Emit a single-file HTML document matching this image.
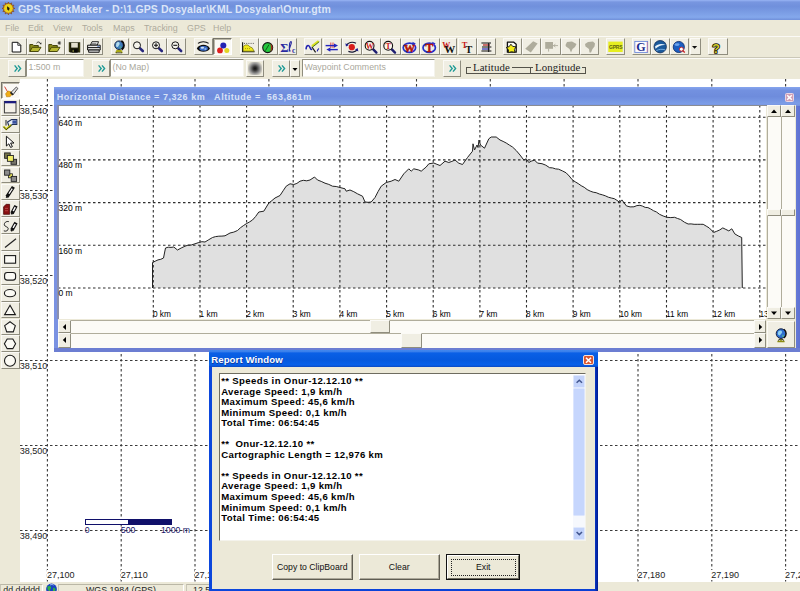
<!DOCTYPE html>
<html><head><meta charset="utf-8"><title>GPS TrackMaker</title>
<style>
*{box-sizing:border-box;margin:0;padding:0}
html,body{width:800px;height:591px;overflow:hidden;background:#ece9d8;font-family:"Liberation Sans",sans-serif;}
.a{position:absolute}
#title{left:0;top:0;width:800px;height:19.6px;background:linear-gradient(#98b4f4 0,#7896e0 10%,#7090dc 32%,#7a9ce4 60%,#84a8ec 86%,#7090da 100%)}
#title span{position:absolute;left:18px;top:3px;font-weight:bold;font-size:10.5px;color:#dbe5f8;white-space:nowrap;letter-spacing:.11px}
#menu{left:0;top:19.6px;width:800px;height:16.4px;background:#ece9d8}
#menu span{position:absolute;top:3px;font-size:8.9px;color:#aeab9d;white-space:nowrap}
#tb1{left:0;top:36px;width:800px;height:22px;background:#ece9d8;border-top:1px solid #fbfaf6;border-bottom:1px solid #cbc8b8}
#tb2{left:0;top:58px;width:800px;height:21px;background:#ece9d8;border-top:1px solid #fbfaf6}
.b{position:absolute;background:#f0eee3;border:1px solid;border-color:#fbfaf6 #8f8d7e #8f8d7e #fbfaf6;overflow:hidden}
.b.p{border-color:#77756a #fff #fff #77756a;background:#faf9f5;box-shadow:inset 1px 1px 0 #b9b6a6}
.b svg{position:absolute;left:0;top:0}
.f{position:absolute;background:#fff;border:1px solid;border-color:#8f8d7e #f4f3ec #f4f3ec #8f8d7e;font-size:8.800px;color:#aaa89c;white-space:nowrap;overflow:hidden;line-height:15px;padding-left:1.500px}
#ltb{left:0;top:79px;width:20px;height:503px;background:#ece9d8}
#map{left:20px;top:79px;width:780px;height:503px;background:#fff;overflow:hidden}
#status{left:0;top:582px;width:800px;height:9px;background:#ece9d8;overflow:hidden}
.l{position:absolute;font-size:9.050px;color:#1c1c1c;white-space:nowrap;line-height:10px}
</style></head><body>
<div id="title" class="a"><svg class="a" style="left:0;top:0" width="18" height="18" viewBox="0 0 18 18"><polygon points="14.8,8.4 12.7,9.5 13.9,11.6 11.5,11.5 11.6,13.9 9.5,12.7 8.4,14.8 7.3,12.7 5.2,13.9 5.3,11.5 2.9,11.6 4.1,9.5 2.0,8.4 4.1,7.3 2.9,5.2 5.3,5.3 5.2,2.9 7.3,4.1 8.4,2.0 9.5,4.1 11.6,2.9 11.5,5.3 13.9,5.2 12.7,7.3" fill="#c8841a" stroke="#7a3a10" stroke-width=".6"/><circle cx="8.4" cy="8.4" r="4.3" fill="#ecd21a"/><path d="M7 6.200l2.600 1.800-.6 2.800-1.800-1.400z" fill="#1a1a10"/></svg><span>GPS TrackMaker - D:\1.GPS Dosyalar\KML Dosyalar\Onur.gtm</span></div>
<div id="menu" class="a"><span style="left:5px">File</span><span style="left:28px">Edit</span><span style="left:53px">View</span><span style="left:82px">Tools</span><span style="left:113px">Maps</span><span style="left:144px">Tracking</span><span style="left:187px">GPS</span><span style="left:213px">Help</span></div>
<div id="tb1" class="a"></div><div id="tb2" class="a"></div>
<div class="b" style="left:8px;top:37.5px;width:19px;height:17.5px"></div>
<div class="b" style="left:27px;top:37.5px;width:19px;height:17.5px"></div>
<div class="b" style="left:46px;top:37.5px;width:19px;height:17.5px"></div>
<div class="b" style="left:65px;top:37.5px;width:19px;height:17.5px"></div>
<div class="b" style="left:84px;top:37.5px;width:19px;height:17.5px"></div>
<div class="b" style="left:110.6px;top:37.5px;width:18.900000000000006px;height:17.5px"></div>
<div class="b" style="left:129.5px;top:37.5px;width:18.900000000000006px;height:17.5px"></div>
<div class="b" style="left:148.4px;top:37.5px;width:19.0px;height:17.5px"></div>
<div class="b" style="left:167.4px;top:37.5px;width:19px;height:17.5px"></div>
<div class="b" style="left:194px;top:37.5px;width:18.5px;height:17.5px"></div>
<div class="b p" style="left:212.5px;top:37.5px;width:19px;height:17.5px"></div>
<div class="b" style="left:240px;top:37.5px;width:18.5px;height:17.5px"></div>
<div class="b" style="left:258.5px;top:37.5px;width:19.5px;height:17.5px"></div>
<div class="b" style="left:278px;top:37.5px;width:19px;height:17.5px"></div>
<div class="b" style="left:303.8px;top:37.5px;width:18.69999999999999px;height:17.5px"></div>
<div class="b" style="left:322.5px;top:37.5px;width:19.5px;height:17.5px"></div>
<div class="b" style="left:342px;top:37.5px;width:19.80000000000001px;height:17.5px"></div>
<div class="b" style="left:361.8px;top:37.5px;width:19.5px;height:17.5px"></div>
<div class="b" style="left:381.3px;top:37.5px;width:19.69999999999999px;height:17.5px"></div>
<div class="b" style="left:401px;top:37.5px;width:19.30000000000001px;height:17.5px"></div>
<div class="b" style="left:420.3px;top:37.5px;width:19.30000000000001px;height:17.5px"></div>
<div class="b" style="left:439.6px;top:37.5px;width:17.899999999999977px;height:17.5px"></div>
<div class="b" style="left:457.5px;top:37.5px;width:19.5px;height:17.5px"></div>
<div class="b" style="left:477px;top:37.5px;width:19px;height:17.5px"></div>
<div class="b" style="left:502.8px;top:37.5px;width:18.80000000000001px;height:17.5px"></div>
<div class="b" style="left:521.6px;top:37.5px;width:19.399999999999977px;height:17.5px"></div>
<div class="b" style="left:541px;top:37.5px;width:19.5px;height:17.5px"></div>
<div class="b" style="left:560.5px;top:37.5px;width:19.299999999999955px;height:17.5px"></div>
<div class="b" style="left:579.8px;top:37.5px;width:19px;height:17.5px"></div>
<div class="b" style="left:606px;top:37.5px;width:19px;height:17.5px"></div>
<div class="b" style="left:632px;top:37.5px;width:18.600000000000023px;height:17.5px"></div>
<div class="b" style="left:650.6px;top:37.5px;width:19.600000000000023px;height:17.5px"></div>
<div class="b" style="left:670.2px;top:37.5px;width:19px;height:17.5px"></div>
<div class="b" style="left:689.5px;top:37.5px;width:11px;height:17.5px"></div>
<div class="b" style="left:708px;top:37.5px;width:19.5px;height:17.5px"></div>
<svg class="a" style="left:0;top:0;pointer-events:none" width="800" height="60" viewBox="0 0 800 60"><path d="M12.2 42.3h5.6l3 3v6.7h-8.6z" fill="#fff" stroke="#111" stroke-width="1"/><path d="M17.8 42.3v3h3" fill="none" stroke="#111" stroke-width=".8"/><path d="M29.8 51.5v-7h3l1 1h4.5v2" fill="#8c8c1c" stroke="#3a3a00" stroke-width=".9"/><path d="M29.8 51.5l2.6-4.2h8.6l-2.7 4.2z" fill="#b9b934" stroke="#3a3a00" stroke-width=".9"/><path d="M36.5 43.2c1.2-1.6 3-1.6 4 .2" fill="none" stroke="#222" stroke-width=".9"/><path d="M39.3 43.8l1.9.6.3-2z" fill="#222"/><path d="M48.8 51.5v-7h3l1 1h4.5v2" fill="#8c8c1c" stroke="#3a3a00" stroke-width=".9"/><path d="M48.8 51.5l2.6-4.2h8.6l-2.7 4.2z" fill="#b9b934" stroke="#3a3a00" stroke-width=".9"/><path d="M59.3 41.2v3.6M57.5 43h3.6M58 41.8l2.6 2.4M60.6 41.8l-2.6 2.4" stroke="#333" stroke-width=".8"/><path d="M68.800 42.200h11.400v10.400h-10.200l-1.200-1.200z" fill="#1c1c08"/><rect x="71.200" y="42.800" width="6.600" height="4.800" fill="#e2dece"/><rect x="71.600" y="49.200" width="6" height="3.400" fill="#050505"/><rect x="72.400" y="49.800" width="1.600" height="2.400" fill="#6b6b30"/><path d="M69.600 43v8.600M79.400 43v8.800" stroke="#4a4a10" stroke-width=".8"/><path d="M90.500 45l1.500-3.300h6.500l-1.200 3.300z" fill="#fbfbfb" stroke="#111" stroke-width=".9"/><path d="M91.800 43.400h4.600" stroke="#555" stroke-width=".7"/><path d="M87.600 45.200h12.600v4.800h-12.600z" fill="#ececec" stroke="#111" stroke-width="1"/><path d="M88.600 50h10.600v2.300h-10.600z" fill="#c8c8c8" stroke="#111" stroke-width=".9"/><path d="M88 47.600h12" stroke="#111" stroke-width="1"/><rect x="97.400" y="45.800" width="2" height="1.200" fill="#6a8ad0"/><path d="M115.6 52.6l3.400-2.600 3.400 2.600M116.4 50.2l2.600 1.400 2.600-1.400" stroke="#a8a814" stroke-width="1.500" fill="none"/><path d="M115.8 52.800000000000004h6.400" stroke="#2a2a00" stroke-width=".8"/><circle cx="119" cy="45.2" r="4.3" fill="#3f7cbc" stroke="#1a2440" stroke-width=".9"/><path d="M116.4 43.0c1.200-1.400 2.800-1.200 3.200 0s-.6 2.200-1.400 3.400-2 .4-2.200-1z" fill="#b4dcee"/><path d="M119.6 46.2c1-.4 2 .2 1.800 1.400s-1.600 1.200-2 .2z" fill="#4aa090"/><path d="M121.4 40.800000000000004a5.400 5.400 0 0 1 .4 9" fill="none" stroke="#0a0a0a" stroke-width="1.700"/><path d="M139.8 48.099999999999994l3 2.900" stroke="#26267c" stroke-width="2.600" stroke-linecap="round"/><circle cx="137" cy="45.3" r="3.500" fill="#f4f3ec" stroke="#151515" stroke-width="1"/><path d="M158.8 48.099999999999994l3 2.900" stroke="#26267c" stroke-width="2.600" stroke-linecap="round"/><circle cx="156" cy="45.3" r="3.500" fill="#f4f3ec" stroke="#151515" stroke-width="1"/><path d="M154 45.3h4M156 43.3v4" stroke="#111" stroke-width="1.1"/><path d="M178.10000000000002 48.099999999999994l3 2.900" stroke="#26267c" stroke-width="2.600" stroke-linecap="round"/><circle cx="175.3" cy="45.3" r="3.500" fill="#f4f3ec" stroke="#151515" stroke-width="1"/><path d="M173.3 45.3h4" stroke="#111" stroke-width="1.1"/><path d="M198 43.400c2.600-2.200 8-2.200 10.600 0" fill="none" stroke="#111" stroke-width="1.200"/><path d="M196.800 48.400c2.600-4.800 10.600-4.800 13.200 0-2.600 4.400-10.600 4.400-13.200 0z" fill="#0c0c0c"/><ellipse cx="203.600" cy="48.400" rx="4.200" ry="2.400" fill="#3a6cc8"/><ellipse cx="202.400" cy="47.800" rx="1.700" ry="1" fill="#cfe2f6"/><ellipse cx="205.400" cy="49" rx="1.100" ry=".7" fill="#a8c8ee"/><circle cx="220" cy="50.400" r="2.900" fill="#de2020"/><circle cx="226.800" cy="50.500" r="2.500" fill="#e2d424"/><circle cx="223.300" cy="45.400" r="3" fill="#2222b4"/><path d="M242.6 42.2v9.6h12" fill="none" stroke="#111" stroke-width="1.1"/><path d="M243.2 51.2v-4.6l2-1.6 2.6 0 2.2 1.8 2.2 1 2 3.4z" fill="#f0e81c" stroke="#5a5a00" stroke-width=".6"/><path d="M244 43.4h10" stroke="#444" stroke-width=".9" stroke-dasharray="1 1.2"/><path d="M245 48.6h6" stroke="#8a7a00" stroke-width=".7" stroke-dasharray="1 1"/><circle cx="267.7" cy="47.6" r="5" fill="#23c63c" stroke="#141414" stroke-width="1.1"/><path d="M270.3 43.4a5 5 0 0 1 0 8.4c.8-2.6.8-5.8 0-8.4z" fill="#a5321c"/><path d="M265.4 50.6l3.6-6" stroke="#0d5a16" stroke-width="1"/><text x="280.2" y="52" font-family="Liberation Serif" font-size="12.5" font-weight="bold" fill="#2a2aa0">Σ</text><path d="M289.2 51.6c-.8-3 2.6-7.6 2.2-9.4-.4-1.4-1.8 0-2 2.8s-.2 5.4 1 6.4" fill="none" stroke="#2a2aa0" stroke-width="1.1"/><text x="292" y="52.6" font-family="Liberation Serif" font-size="7.5" font-weight="bold" fill="#2a2aa0">c</text><path d="M306 49.400c.2-2.400 1-3.800 2.200-3.800s1.600 1.400 2.200 2.800 1.200 1.200 1.800.8" fill="none" stroke="#2222b0" stroke-width="1.500"/><path d="M311.800 46.800l3.800 5.600" stroke="#111" stroke-width="1.100"/><path d="M312 46.200l6.600-5.200" stroke="#d8e020" stroke-width="2.200"/><path d="M312.600 47l6.600-5.200" stroke="#2a5a10" stroke-width=".8"/><path d="M317.200 51.400c.2-1.400.8-2.400 1.800-3" fill="none" stroke="#2222b0" stroke-width="1.200"/><path d="M330.800 42.400v5.600M333 42.400v5.600" stroke="#e05050" stroke-width="1.100"/><path d="M325.600 45.600h9" stroke="#2222c0" stroke-width="1.400"/><path d="M334 43.400l4 2.200-4 2.200z" fill="#2222c0"/><path d="M329.600 49.600h8.200" stroke="#2222c0" stroke-width="1.400"/><path d="M330.400 47.400l-4 2.200 4 2.200z" fill="#2222c0"/><circle cx="351.800" cy="47.200" r="3.100" fill="#d81c1c"/><path d="M346.600 45.200c1-2.600 5.600-4 9.400-2" fill="none" stroke="#151530" stroke-width="1.200"/><path d="M345.400 43.200l.6 3.400 2.800-1.600z" fill="#1c1c90"/><path d="M357 49.400c-1 2.400-5 3.600-8.600 2" fill="none" stroke="#151530" stroke-width="1.200"/><path d="M358.400 51.400l-.8-3.400-2.600 1.800z" fill="#1c1c90"/><path d="M373.0 49.199999999999996l3.400 3.400" stroke="#1c1c70" stroke-width="2.400" stroke-linecap="round"/><circle cx="369.6" cy="45.8" r="4.4" fill="#fbf6ee" stroke="#151515" stroke-width="1.1"/><text x="365.8" y="48.699999999999996" font-family="Liberation Serif" font-size="8" font-weight="bold" fill="#c81818">W</text><path d="M391.59999999999997 49.199999999999996l3.400 3.400" stroke="#1c1c70" stroke-width="2.400" stroke-linecap="round"/><circle cx="388.2" cy="45.8" r="4.4" fill="#fbf6ee" stroke="#151515" stroke-width="1.1"/><text x="385.59999999999997" y="48.699999999999996" font-family="Liberation Serif" font-size="8" font-weight="bold" fill="#c81818">T</text><ellipse cx="409.4" cy="47.800" rx="6.200" ry="4.600" fill="none" stroke="#2230c8" stroke-width="1.700"/><path d="M412.4 41.800l3.400 1.800-3 2z" fill="#2230c8"/><text x="404.0" y="52" font-family="Liberation Serif" font-size="11" font-weight="bold" fill="#b41408" stroke="#b41408" stroke-width=".5">W</text><ellipse cx="429.2" cy="47.800" rx="6.200" ry="4.600" fill="none" stroke="#2230c8" stroke-width="1.700"/><path d="M432.2 41.800l3.400 1.800-3 2z" fill="#2230c8"/><text x="425.4" y="52" font-family="Liberation Serif" font-size="11.5" font-weight="bold" fill="#b41408" stroke="#b41408" stroke-width=".5">T</text><text x="442.2" y="47.6" font-family="Liberation Serif" font-size="8" font-weight="bold" fill="#c81818">W</text><text x="444.2" y="52.6" font-family="Liberation Serif" font-size="11" font-weight="bold" fill="#111">W</text><text x="461.8" y="48" font-family="Liberation Serif" font-size="8.5" font-weight="bold" fill="#c81818">T</text><text x="465.2" y="52.6" font-family="Liberation Serif" font-size="10.5" font-weight="bold" fill="#111">T</text><path d="M481.4 43h9.6M482 47h9.4M481.4 51h10" stroke="#111" stroke-width="1.2"/><path d="M483 45h7" stroke="#b01818" stroke-width="1.2"/><path d="M482 49h7.6" stroke="#2828b0" stroke-width="1.2"/><path d="M488.6 43v9" stroke="#222" stroke-width="1.3"/><path d="M507.400 42.200h6.400l2.400 2v8h-8.800z" fill="#fdfdf6" stroke="#111" stroke-width="1.300" stroke-linejoin="round"/><path d="M506.200 47.600l3-1 1.700-2.400 1.800 2.200 3.300.4-1.600 2.700.6 2.900-3.500-.7-3.200 1 .2-3z" fill="#f4ec18" stroke="#111" stroke-width=".9" stroke-linejoin="round"/><path d="M525.200 48.800l8-7.600 4.400 2.400-6.800 8.800z" fill="#aeac9c"/><rect x="545.200" y="42" width="7.800" height="6.800" fill="#aeac9c"/><path d="M553 45.600h5M555.400 44.200l-1.800 1.400 1.800 1.400M548.600 48.800v2.800" stroke="#aeac9c" stroke-width=".9" fill="none"/><path d="M565.500 45l1.500-3 5-.5 4.500 2.500-1.500 3-2.500 2-1.500 3.500-1.500-3.500-3.500-2.500z" fill="#aeac9c"/><path d="M585 44l3-2 5-.5 2 2-.5 3-2 2.500-1.500 3.500h-1.500l-.5-3.500-3.500-2.500z" fill="#aeac9c"/><rect x="608.300" y="41.600" width="14.400" height="10.400" fill="#e6ee20"/><text x="608.900" y="48.800" font-family="Liberation Sans" font-size="5" font-weight="bold" fill="#5a6410" letter-spacing="-.15">GPRS</text><rect x="634.800" y="41.400" width="12.800" height="11" fill="#fdfdff" stroke="#6a86d8" stroke-width=".9"/><path d="M647.200 42v10" stroke="#d86a8a" stroke-width=".7"/><text x="636.200" y="51.400" font-family="Liberation Serif" font-size="12" font-weight="bold" fill="#1c2c8c">G</text><circle cx="660.200" cy="46.700" r="6.200" fill="#1b5a9c" stroke="#0e2a58" stroke-width=".8"/><path d="M655 46.6c2.4-2.6 6.6-3.4 10.6-1.6-3.6-.4-7.4.8-10 3.800z" fill="#e8f2fb"/><path d="M656.4 50.600c2.600-1.400 6-1.800 9-.600" fill="none" stroke="#7fb4e6" stroke-width=".9"/><circle cx="678.8" cy="47" r="5.6" fill="#1c5ec0" stroke="#0e2a68" stroke-width=".8"/><ellipse cx="677" cy="44.600" rx="2.600" ry="1.400" fill="#6fa4ec"/><circle cx="681.4" cy="49.200" r="2" fill="#fff" stroke="#c22" stroke-width=".9"/><path d="M682.600 50.600l2.200 2" stroke="#c22" stroke-width="1.300"/><path d="M692 46h5.200l-2.600 2.800z" fill="#111"/><text x="712.200" y="52.600" font-family="Liberation Sans" font-size="12.500" font-weight="bold" fill="#d6cc2c" stroke="#15150a" stroke-width="1.700" paint-order="stroke" stroke-linejoin="round">?</text></svg>
<div class="b" style="left:8px;top:60px;width:18px;height:17px"><svg width="18" height="16" viewBox="0 0 18 16"><path d="M5.600 4.400l2.600 3.100-2.600 3.100M9 4.400l2.600 3.100-2.600 3.100" fill="none" stroke="#1d9a96" stroke-width="1.400"/></svg></div>
<div class="f" style="left:26px;top:59px;width:58px;height:18px">1:500 m</div>
<div class="b" style="left:92px;top:60px;width:18px;height:17px"><svg width="18" height="16" viewBox="0 0 18 16"><path d="M5.600 4.400l2.600 3.100-2.600 3.100M9 4.400l2.600 3.100-2.600 3.100" fill="none" stroke="#1d9a96" stroke-width="1.400"/></svg></div>
<div class="f" style="left:110px;top:59px;width:134px;height:18px">(No Map)</div>
<div class="b" style="left:246px;top:60px;width:18px;height:17px"><div class="a" style="left:1px;top:1px;width:14px;height:13px;background:radial-gradient(circle,#111 0,#333 20%,#999 55%,#ece9d8 85%)"></div></div>
<div class="b" style="left:272px;top:60px;width:18px;height:17px"><svg width="18" height="16" viewBox="0 0 18 16"><path d="M5.600 4.400l2.600 3.100-2.600 3.100M9 4.400l2.600 3.100-2.600 3.100" fill="none" stroke="#1d9a96" stroke-width="1.400"/></svg></div>
<div class="b" style="left:290px;top:60px;width:10px;height:17px"><svg width="8" height="15"><path d="M1.5 7h5l-2.5 3z" fill="#000"/></svg></div>
<div class="f" style="left:302px;top:59px;width:133px;height:18px">Waypoint Comments</div>
<div class="b" style="left:443px;top:60px;width:18px;height:17px"><svg width="18" height="16" viewBox="0 0 18 16"><path d="M5.600 4.400l2.600 3.100-2.600 3.100M9 4.400l2.600 3.100-2.600 3.100" fill="none" stroke="#1d9a96" stroke-width="1.400"/></svg></div>
<div class="a" style="left:466px;top:67px;width:120px;height:7px;border:1px solid #55534a;border-top-color:#55534a"></div>
<div class="a" style="left:530px;top:67px;width:1px;height:7px;background:#55534a"></div>
<div class="a" style="left:471px;top:61px;padding:0 2px;background:#ece9d8;font-family:'Liberation Serif',serif;font-size:10.800px;letter-spacing:.1px;line-height:12px;color:#222">Latitude</div>
<div class="a" style="left:533px;top:61px;padding:0 2px;background:#ece9d8;font-family:'Liberation Serif',serif;font-size:10.800px;letter-spacing:.1px;line-height:12px;color:#222">Longitude</div>
<div id="ltb" class="a"></div>
<div class="b p" style="left:1px;top:82.2px;width:18.5px;height:16.8px"></div>
<div class="b" style="left:1px;top:99.1px;width:18.5px;height:16.8px"></div>
<div class="b" style="left:1px;top:116.0px;width:18.5px;height:16.8px"></div>
<div class="b" style="left:1px;top:132.8px;width:18.5px;height:16.8px"></div>
<div class="b" style="left:1px;top:149.7px;width:18.5px;height:16.8px"></div>
<div class="b" style="left:1px;top:166.6px;width:18.5px;height:16.8px"></div>
<div class="b" style="left:1px;top:183.5px;width:18.5px;height:16.8px"></div>
<div class="b" style="left:1px;top:200.4px;width:18.5px;height:16.8px"></div>
<div class="b" style="left:1px;top:217.2px;width:18.5px;height:16.8px"></div>
<div class="b" style="left:1px;top:234.1px;width:18.5px;height:16.8px"></div>
<div class="b" style="left:1px;top:251.0px;width:18.5px;height:16.8px"></div>
<div class="b" style="left:1px;top:267.9px;width:18.5px;height:16.8px"></div>
<div class="b" style="left:1px;top:284.8px;width:18.5px;height:16.8px"></div>
<div class="b" style="left:1px;top:301.6px;width:18.5px;height:16.8px"></div>
<div class="b" style="left:1px;top:318.5px;width:18.5px;height:16.8px"></div>
<div class="b" style="left:1px;top:335.4px;width:18.5px;height:16.8px"></div>
<div class="b" style="left:1px;top:352.3px;width:18.5px;height:16.8px"></div>
<svg class="a" style="left:0;top:0;pointer-events:none" width="22" height="400" viewBox="0 0 22 400"><path d="M4.600 86.60000000000001l3.400 6" stroke="#d02a1a" stroke-width=".9"/><path d="M5.600 93.8l2.400-2.800 3 .8 1 2.600-1.800 2.200-3.600.2z" fill="#f0ae18" stroke="#b87a08" stroke-width=".6"/><path d="M10.800 92.60000000000001l5.600-5.600 1.400 1.400-4.800 6.400z" fill="#e4e4e4" stroke="#3a3a3a" stroke-width=".9"/><path d="M10.600 92.4l2.400 2.400" stroke="#222" stroke-width="1.700"/><rect x="4.400" y="101.48" width="11.600" height="11.400" fill="#f4f1e8" stroke="#3a3a3a" stroke-width="1"/><rect x="4.400" y="101.08" width="11.600" height="2.200" fill="#1c1c80"/><path d="M6 119.96v5.600" stroke="#222" stroke-width="1"/><path d="M7.600 121.96l4-2.400h5.200v5h-4.600l-3 2.600z" fill="#e8eef8" stroke="#20305a" stroke-width="1.100"/><rect x="12.400" y="120.36" width="4" height="3.400" fill="#3a52a0"/><path d="M3.600 126.36l2.600 2.800 4.800-4.400" fill="none" stroke="#d0d01c" stroke-width="2"/><path d="M3.400 126.75999999999999l2.800 3 5-4.400" fill="none" stroke="#1a1a00" stroke-width=".8"/><path d="M6.400 136.24v9.800l2.400-2.200 1.800 3.600 1.800-.8-1.800-3.600h3.400z" fill="#fff" stroke="#111" stroke-width="1"/><rect x="4.600" y="152.92" width="5.600" height="5.400" fill="#77754a" stroke="#222" stroke-width=".9"/><rect x="11" y="159.32" width="5.600" height="5" fill="#77756a" stroke="#222" stroke-width=".9"/><rect x="7.400" y="155.52" width="6" height="5.800" fill="#f2ee6a" stroke="#222" stroke-width=".9"/><rect x="8.400" y="173.79999999999998" width="4" height="4" fill="#eeea5a" stroke="#222" stroke-width=".8"/><rect x="4.600" y="170.0" width="5.200" height="5.200" fill="#8c8c8c" stroke="#222" stroke-width=".9"/><rect x="11.200" y="176.4" width="5.400" height="5" fill="#8c8c8c" stroke="#222" stroke-width=".9"/><path d="M7 196.67999999999998L13.4 186.88" stroke="#111" stroke-width="3.5" stroke-linecap="butt"/><path d="M8.92 193.74L12.25 188.64" stroke="#fff" stroke-width="1.3"/><path d="M6.4 197.67999999999998L8.60 194.23" stroke="#111" stroke-width="1.800"/><path d="M3.600 214.36v-7.600l2.600-2.400h3.400v10z" fill="#8a1010" stroke="#400" stroke-width=".7"/><path d="M5 208.36h3M5 210.76000000000002h3" stroke="#c85a5a" stroke-width=".7"/><path d="M12 213.36L16 205.76000000000002" stroke="#111" stroke-width="3.6" stroke-linecap="butt"/><path d="M13.20 211.08L15.28 207.13" stroke="#fff" stroke-width="1.4000000000000001"/><path d="M11.4 214.36L13.00 211.46" stroke="#111" stroke-width="1.800"/><path d="M8.800 221.64000000000001c-2.600-.8-5 1.400-4.400 3.400s3.400 1.400 3.800 3.400-2.400 3.400-4.400 2.400" fill="none" stroke="#111" stroke-width=".9"/><path d="M11.8 230.24L16 222.64000000000001" stroke="#111" stroke-width="3.6" stroke-linecap="butt"/><path d="M13.06 227.96L15.24 224.01" stroke="#fff" stroke-width="1.4000000000000001"/><path d="M11.200000000000001 231.24L12.85 228.34" stroke="#111" stroke-width="1.800"/><path d="M5 247.52L16 238.72" stroke="#222" stroke-width="1.200"/><rect x="4.600" y="255.6" width="11" height="7.600" fill="#fbfaf4" stroke="#1a1a1a" stroke-width="1.100"/><rect x="4.600" y="272.48" width="11" height="7.600" rx="2.600" fill="#fbfaf4" stroke="#1a1a1a" stroke-width="1.100"/><ellipse cx="10" cy="293.15999999999997" rx="5.600" ry="3.600" fill="#fbfaf4" stroke="#1a1a1a" stroke-width="1.100"/><path d="M10 305.24l5.400 9.400h-10.800z" fill="#fbfaf4" stroke="#1a1a1a" stroke-width="1.100"/><polygon points="10.00,321.72 15.33,325.59 13.29,331.85 6.71,331.85 4.67,325.59" fill="#fbfaf4" stroke="#1a1a1a" stroke-width="1.100"/><polygon points="15.60,343.80 12.80,348.65 7.20,348.65 4.40,343.80 7.20,338.95 12.80,338.95" fill="#fbfaf4" stroke="#1a1a1a" stroke-width="1.100"/><circle cx="10" cy="360.67999999999995" r="5.500" fill="#fbfaf4" stroke="#1a1a1a" stroke-width="1.100"/></svg>
<div id="map" class="a">
<svg class="a" style="left:0;top:0" width="780" height="503"><g stroke="#3a3a3a" stroke-width="1.1" stroke-dasharray="2.500 2.500" fill="none"><path d="M27.4 0V503"/><path d="M101.2 0V503"/><path d="M175.0 0V503"/><path d="M248.9 0V503"/><path d="M322.7 0V503"/><path d="M396.5 0V503"/><path d="M470.3 0V503"/><path d="M544.1 0V503"/><path d="M618.0 0V503"/><path d="M691.8 0V503"/><path d="M765.6 0V503"/><path d="M0 26.5H780"/><path d="M0 111.5H780"/><path d="M0 196.5H780"/><path d="M0 281.5H780"/><path d="M0 366.5H780"/><path d="M0 451.5H780"/></g></svg>
<div class="l" style="left:-0.300px;top:27.1px">38,540</div>
<div class="l" style="left:-0.300px;top:112.1px">38,530</div>
<div class="l" style="left:-0.300px;top:197.1px">38,520</div>
<div class="l" style="left:-0.300px;top:282.1px">38,510</div>
<div class="l" style="left:-0.300px;top:367.1px">38,500</div>
<div class="l" style="left:-0.300px;top:452.1px">38,490</div>
<div class="l" style="left:26.9px;top:491px;background:#fff">27,100</div>
<div class="l" style="left:100.7px;top:491px;background:#fff">27,110</div>
<div class="l" style="left:174.5px;top:491px;background:#fff">27,120</div>
<div class="l" style="left:248.4px;top:491px;background:#fff">27,130</div>
<div class="l" style="left:322.2px;top:491px;background:#fff">27,140</div>
<div class="l" style="left:396.0px;top:491px;background:#fff">27,150</div>
<div class="l" style="left:469.8px;top:491px;background:#fff">27,160</div>
<div class="l" style="left:543.6px;top:491px;background:#fff">27,170</div>
<div class="l" style="left:617.5px;top:491px;background:#fff">27,180</div>
<div class="l" style="left:691.3px;top:491px;background:#fff">27,190</div>
<div class="l" style="left:765.1px;top:491px;background:#fff">27,200</div>
</div>
<div id="status" class="a"><div class="a" style="left:0;top:1.5px;width:43px;height:9px;border:1px solid;border-color:#bab7a6 #fff #fff #c8c5b5"></div><div class="a" style="left:3.300px;top:2.600px;font-size:8.800px;line-height:10px;color:#222">dd.ddddd</div><svg class="a" style="left:45px;top:1px" width="13" height="10" viewBox="0 0 13 10"><circle cx="6.500" cy="6" r="5.400" fill="#1a44c0"/><path d="M2.500 3.500c1.500-1 3-.5 3.500.5s-1 2-1 3.500-1.500 0-2.500-1.500zM8 5c1-.5 2.500 0 2.500 1.500s-1.500 2.500-2.500 2z" fill="#2fae4a"/><path d="M5 2c1-.6 2.600-.6 3.600 0" stroke="#cfe4ff" stroke-width=".8" fill="none"/></svg><div class="a" style="left:58px;top:1.5px;width:126px;height:9px;border:1px solid;border-color:#bab7a6 #fff #fff #c8c5b5"></div><div class="a" style="left:86px;top:2.600px;font-size:8.800px;line-height:10px;color:#222;white-space:nowrap">WGS 1984 (GPS)</div><div class="a" style="left:186px;top:1.5px;width:130px;height:9px;border:1px solid;border-color:#bab7a6 #fff #fff #c8c5b5"></div><div class="a" style="left:193px;top:2.600px;font-size:8.800px;line-height:10px;color:#222">12,5</div></div>
<div class="a" style="left:85px;top:519px;width:86.700px;height:5.500px;border:1px solid #10106a;background:#fff"></div>
<div class="a" style="left:128px;top:519px;width:43.700px;height:5.500px;background:#10106a"></div>
<div class="l" style="left:84.800px;top:525.300px;color:#15156a;font-size:8.700px">0</div>
<div class="l" style="left:120.800px;top:525.300px;color:#15156a;font-size:8.700px">500</div>
<div class="l" style="left:161px;top:525.300px;color:#15156a;font-size:8.700px">1000 m</div>
<div class="a" id="pw" style="left:54px;top:87px;width:746px;height:264.700px;background:linear-gradient(90deg,#7a92e2 0,#748ee0 98%,#5f72d2 100%);overflow:hidden">
<div class="a" style="left:0;top:0;width:746px;height:18.500px;background:linear-gradient(#86a5ee 0,#7391e0 18%,#6e8cdc 50%,#7c9de7 88%,#7590de 100%)"></div>
<div class="a" style="left:2.8px;top:5.3px;font-weight:bold;font-size:9px;letter-spacing:.54px;color:#d8e2f7;white-space:nowrap;line-height:10px">Horizontal Distance = 7,326 km&nbsp;&nbsp; Altitude =&nbsp; 563,861m</div>
<div class="a" style="left:731px;top:5.5px;width:9px;height:9px;background:#cf9db4;border:1px solid #e9d5e2;border-radius:1.5px"><svg class="a" style="left:0;top:0" width="7" height="7"><path d="M1.2 1.2l4.6 4.6M5.8 1.2l-4.6 4.6" stroke="#fff" stroke-width="1.5"/></svg></div>
<div class="a" style="left:4px;top:18px;width:738px;height:243px;background:#ece9d8">
<svg class="a" style="left:0;top:0;background:#fff" width="708" height="214"><path d="M94.5 183.0 L94.5 157.5 L97.2 156.2 L100.0 154.9 L102.8 154.3 L105.5 153.0 L107.5 143.0 L110.2 142.2 L113.0 142.4 L115.8 142.0 L119.5 145.0 L123.2 143.0 L127.0 141.2 L130.1 140.1 L133.2 140.0 L137.0 138.8 L140.8 137.5 L143.9 136.7 L147.0 137.0 L150.8 134.7 L154.5 132.5 L157.6 131.6 L160.8 131.2 L163.9 131.1 L167.0 130.8 L172.0 128.0 L175.8 127.1 L179.5 125.5 L182.4 122.8 L185.3 120.7 L188.2 118.8 L191.4 117.0 L194.5 115.0 L197.6 111.5 L200.8 107.0 L205.8 106.2 L210.8 98.0 L213.9 95.6 L217.0 93.0 L222.0 90.5 L225.1 85.8 L228.2 81.2 L232.0 78.8 L235.8 79.5 L238.9 78.4 L242.0 76.2 L245.3 75.3 L248.7 75.8 L252.0 75.0 L256.5 72.0 L259.5 75.0 L263.2 76.4 L267.0 78.2 L270.8 79.4 L274.5 81.2 L278.2 81.5 L282.0 82.5 L287.0 83.8 L288.2 86.2 L292.0 85.0 L295.8 86.7 L299.5 88.8 L304.5 91.2 L307.0 97.0 L310.1 97.3 L313.2 97.0 L317.0 92.5 L320.1 86.5 L323.2 81.2 L328.2 77.5 L333.2 76.2 L337.0 74.5 L340.8 76.2 L345.8 68.8 L350.8 63.8 L353.2 66.2 L355.8 63.8 L360.8 65.0 L363.2 66.2 L368.2 62.0 L370.8 58.8 L375.8 58.0 L378.9 59.3 L382.0 60.5 L387.0 56.2 L390.8 57.5 L393.9 56.4 L397.0 55.0 L400.8 58.2 L404.5 59.5 L409.5 52.5 L414.5 46.2 L415.0 38.8 L416.5 45.0 L419.0 40.0 L420.0 42.5 L421.0 35.0 L422.5 40.0 L426.5 43.2 L430.8 33.8 L433.2 32.0 L438.2 32.0 L442.0 35.0 L445.1 36.4 L448.2 38.0 L451.4 40.1 L454.5 42.0 L458.2 45.5 L462.0 50.0 L465.8 55.0 L468.2 53.8 L470.8 57.5 L473.2 56.2 L476.5 55.1 L479.5 58.1 L484.0 58.7 L487.8 60.2 L491.6 62.7 L494.6 62.9 L497.6 63.9 L500.6 64.2 L504.4 65.9 L508.1 67.8 L511.2 71.0 L514.2 74.7 L517.2 76.8 L520.2 78.6 L523.2 80.7 L526.2 82.3 L529.2 84.6 L532.2 86.1 L535.2 87.2 L538.2 87.7 L541.3 89.0 L544.3 89.8 L547.3 90.8 L550.3 92.2 L553.3 93.0 L556.3 93.7 L558.9 95.3 L561.5 97.3 L563.9 94.9 L568.4 100.9 L572.1 101.9 L575.9 101.8 L578.9 100.6 L581.9 100.3 L584.5 101.1 L587.2 102.4 L589.9 102.6 L592.5 103.9 L595.5 105.7 L598.5 107.0 L601.5 109.3 L605.2 111.0 L609.0 112.3 L612.8 112.6 L616.6 112.3 L619.6 113.5 L622.6 114.5 L626.4 117.2 L630.1 119.0 L633.1 118.9 L636.1 119.3 L639.2 119.3 L642.2 119.3 L645.2 119.3 L648.2 121.1 L651.2 122.9 L655.7 127.4 L658.7 126.3 L661.8 124.9 L664.8 122.9 L667.8 124.4 L670.8 125.9 L673.8 123.8 L676.8 128.9 L680.2 130.9 L683.7 132.5 L684.3 183.0Z" fill="#e0e0e0"/><g stroke="#2e2e2e" stroke-width="1.1" stroke-dasharray="2.500 2.500" fill="none"><path d="M95.3 0V214"/><path d="M142.0 0V214"/><path d="M188.6 0V214"/><path d="M235.2 0V214"/><path d="M281.9 0V214"/><path d="M328.6 0V214"/><path d="M375.2 0V214"/><path d="M421.9 0V214"/><path d="M468.5 0V214"/><path d="M515.1 0V214"/><path d="M561.8 0V214"/><path d="M608.5 0V214"/><path d="M655.1 0V214"/><path d="M701.8 0V214"/><path d="M0 12.2H708"/><path d="M0 54.9H708"/><path d="M0 97.6H708"/><path d="M0 140.3H708"/><path d="M0 183.0H708"/></g><path d="M94.5 183.0 L94.5 157.5 L97.2 156.2 L100.0 154.9 L102.8 154.3 L105.5 153.0 L107.5 143.0 L110.2 142.2 L113.0 142.4 L115.8 142.0 L119.5 145.0 L123.2 143.0 L127.0 141.2 L130.1 140.1 L133.2 140.0 L137.0 138.8 L140.8 137.5 L143.9 136.7 L147.0 137.0 L150.8 134.7 L154.5 132.5 L157.6 131.6 L160.8 131.2 L163.9 131.1 L167.0 130.8 L172.0 128.0 L175.8 127.1 L179.5 125.5 L182.4 122.8 L185.3 120.7 L188.2 118.8 L191.4 117.0 L194.5 115.0 L197.6 111.5 L200.8 107.0 L205.8 106.2 L210.8 98.0 L213.9 95.6 L217.0 93.0 L222.0 90.5 L225.1 85.8 L228.2 81.2 L232.0 78.8 L235.8 79.5 L238.9 78.4 L242.0 76.2 L245.3 75.3 L248.7 75.8 L252.0 75.0 L256.5 72.0 L259.5 75.0 L263.2 76.4 L267.0 78.2 L270.8 79.4 L274.5 81.2 L278.2 81.5 L282.0 82.5 L287.0 83.8 L288.2 86.2 L292.0 85.0 L295.8 86.7 L299.5 88.8 L304.5 91.2 L307.0 97.0 L310.1 97.3 L313.2 97.0 L317.0 92.5 L320.1 86.5 L323.2 81.2 L328.2 77.5 L333.2 76.2 L337.0 74.5 L340.8 76.2 L345.8 68.8 L350.8 63.8 L353.2 66.2 L355.8 63.8 L360.8 65.0 L363.2 66.2 L368.2 62.0 L370.8 58.8 L375.8 58.0 L378.9 59.3 L382.0 60.5 L387.0 56.2 L390.8 57.5 L393.9 56.4 L397.0 55.0 L400.8 58.2 L404.5 59.5 L409.5 52.5 L414.5 46.2 L415.0 38.8 L416.5 45.0 L419.0 40.0 L420.0 42.5 L421.0 35.0 L422.5 40.0 L426.5 43.2 L430.8 33.8 L433.2 32.0 L438.2 32.0 L442.0 35.0 L445.1 36.4 L448.2 38.0 L451.4 40.1 L454.5 42.0 L458.2 45.5 L462.0 50.0 L465.8 55.0 L468.2 53.8 L470.8 57.5 L473.2 56.2 L476.5 55.1 L479.5 58.1 L484.0 58.7 L487.8 60.2 L491.6 62.7 L494.6 62.9 L497.6 63.9 L500.6 64.2 L504.4 65.9 L508.1 67.8 L511.2 71.0 L514.2 74.7 L517.2 76.8 L520.2 78.6 L523.2 80.7 L526.2 82.3 L529.2 84.6 L532.2 86.1 L535.2 87.2 L538.2 87.7 L541.3 89.0 L544.3 89.8 L547.3 90.8 L550.3 92.2 L553.3 93.0 L556.3 93.7 L558.9 95.3 L561.5 97.3 L563.9 94.9 L568.4 100.9 L572.1 101.9 L575.9 101.8 L578.9 100.6 L581.9 100.3 L584.5 101.1 L587.2 102.4 L589.9 102.6 L592.5 103.9 L595.5 105.7 L598.5 107.0 L601.5 109.3 L605.2 111.0 L609.0 112.3 L612.8 112.6 L616.6 112.3 L619.6 113.5 L622.6 114.5 L626.4 117.2 L630.1 119.0 L633.1 118.9 L636.1 119.3 L639.2 119.3 L642.2 119.3 L645.2 119.3 L648.2 121.1 L651.2 122.9 L655.7 127.4 L658.7 126.3 L661.8 124.9 L664.8 122.9 L667.8 124.4 L670.8 125.9 L673.8 123.8 L676.8 128.9 L680.2 130.9 L683.7 132.5 L684.3 183.0" fill="none" stroke="#222" stroke-width="1"/></svg>
<div class="a" style="left:-1.5px;top:0;width:2.5px;height:214px;background:#8b90ae"></div><div class="a" style="left:0;top:0;width:709px;height:1.2px;background:#8a8c92"></div>
<div class="l" style="left:0.5px;top:12.6px;font-size:8.500px;color:#000">640 m</div>
<div class="l" style="left:0.5px;top:55.3px;font-size:8.500px;color:#000">480 m</div>
<div class="l" style="left:0.5px;top:98.0px;font-size:8.500px;color:#000">320 m</div>
<div class="l" style="left:0.5px;top:140.7px;font-size:8.500px;color:#000">160 m</div>
<div class="l" style="left:0.5px;top:183.4px;font-size:8.500px;color:#000">0 m</div>
<div class="l" style="left:94.9px;top:204.4px;font-size:8.300px;color:#000">0 km</div>
<div class="l" style="left:141.6px;top:204.4px;font-size:8.300px;color:#000">1 km</div>
<div class="l" style="left:188.2px;top:204.4px;font-size:8.300px;color:#000">2 km</div>
<div class="l" style="left:234.8px;top:204.4px;font-size:8.300px;color:#000">3 km</div>
<div class="l" style="left:281.5px;top:204.4px;font-size:8.300px;color:#000">4 km</div>
<div class="l" style="left:328.2px;top:204.4px;font-size:8.300px;color:#000">5 km</div>
<div class="l" style="left:374.8px;top:204.4px;font-size:8.300px;color:#000">6 km</div>
<div class="l" style="left:421.5px;top:204.4px;font-size:8.300px;color:#000">7 km</div>
<div class="l" style="left:468.1px;top:204.4px;font-size:8.300px;color:#000">8 km</div>
<div class="l" style="left:514.8px;top:204.4px;font-size:8.300px;color:#000">9 km</div>
<div class="l" style="left:561.4px;top:204.4px;font-size:8.300px;color:#000">10 km</div>
<div class="l" style="left:608.1px;top:204.4px;font-size:8.300px;color:#000">11 km</div>
<div class="l" style="left:654.7px;top:204.4px;font-size:8.300px;color:#000">12 km</div>
<div class="l" style="left:701.4px;top:204.4px;font-size:8.300px;color:#000">13 km</div>
<div class="a" style="left:709px;top:0;width:14px;height:214px;background:#fcfbf7;border-left:1px solid #b0ad9c"></div>
<div class="b" style="left:709px;top:0;width:14px;height:12px"><svg width="12" height="10"><path d="M3 7h6l-3-3.5z" fill="#000"/></svg></div>
<div class="b" style="left:709px;top:202px;width:14px;height:12px"><svg width="12" height="10"><path d="M3 3.5h6l-3 3.5z" fill="#000"/></svg></div>
<div class="b" style="left:709px;top:104px;width:14px;height:7px"></div>
<div class="a" style="left:723px;top:0;width:14px;height:214px;background:#fcfbf7;border-left:1px solid #b0ad9c"></div>
<div class="b" style="left:723px;top:0;width:14px;height:12px"><svg width="12" height="10"><path d="M3 7h6l-3-3.5z" fill="#000"/></svg></div>
<div class="b" style="left:723px;top:202px;width:14px;height:12px"><svg width="12" height="10"><path d="M3 3.5h6l-3 3.5z" fill="#000"/></svg></div>
<div class="b" style="left:723px;top:104px;width:14px;height:7px"></div>
<div class="a" style="left:0;top:214.5px;width:708px;height:13.5px;background:#fcfbf7;border-top:1px solid #b0ad9c"></div>
<div class="b" style="left:0;top:214.5px;width:12.5px;height:13.5px"><svg width="11" height="12"><path d="M7 3v6l-3.2-3z" fill="#000"/></svg></div>
<div class="b" style="left:695.5px;top:214.5px;width:12.5px;height:13.5px"><svg width="11" height="12"><path d="M4 3v6l3.2-3z" fill="#000"/></svg></div>
<div class="b" style="left:312px;top:214.5px;width:20px;height:13.5px"></div>
<div class="a" style="left:0;top:228px;width:708px;height:14.8px;background:#fcfbf7;border-top:1px solid #b0ad9c"></div>
<div class="b" style="left:0;top:228px;width:12.5px;height:14.8px"><svg width="11" height="12"><path d="M7 3v6l-3.2-3z" fill="#000"/></svg></div>
<div class="b" style="left:695.5px;top:228px;width:12.5px;height:14.8px"><svg width="11" height="12"><path d="M4 3v6l3.2-3z" fill="#000"/></svg></div>
<div class="b" style="left:343px;top:228px;width:20.5px;height:14.8px"></div>
<div class="b" style="left:709px;top:215.500px;width:28px;height:27.300px"><svg width="26" height="24" viewBox="0 0 26 24"><path d="M9.400 19.600h7.200M13 16.400v3" stroke="#8c8c10" stroke-width="1.500"/><path d="M10 18.400l3-1.600 3 1.600" stroke="#1f1f00" stroke-width=".9" fill="none"/><circle cx="13" cy="11.600" r="4.800" fill="#2e6fd0" stroke="#1a2440" stroke-width="1"/><path d="M10.400 9.200c1.400-1.200 3-1 3.600.2s-.8 2.200-1.600 3.400-2.400.4-2.600-1.200z" fill="#8fd0f0"/><path d="M14.200 12.800c1-.4 2 .2 1.800 1.400s-1.600 1.200-2 .2z" fill="#49a8a0"/><path d="M16 7.200a5.800 5.800 0 0 1 .2 8.800" fill="none" stroke="#111" stroke-width="1.300"/></svg></div>
</div><div class="a" style="left:0;top:261px;width:746px;height:4px;background:#6c7ed2"></div></div>
<div class="a" id="rw" style="left:209px;top:350px;width:389.200px;height:241px;background:linear-gradient(90deg,#0c47dc 0,#0a3fd4 99%,#001a90 100%);overflow:hidden">
<div class="a" style="left:0;top:0;width:390px;height:17px;background:linear-gradient(#4288ee 0,#3a80ec 9%,#0a60e6 18%,#0559de 60%,#0760ea 88%,#0b49c0 100%)"></div>
<div class="a" style="left:2.200px;top:5px;font-weight:bold;font-size:9.600px;letter-spacing:.1px;color:#fff;white-space:nowrap;line-height:10px;text-shadow:.5px .5px 0 #123a9c">Report Window</div>
<div class="a" style="left:374px;top:4.500px;width:11px;height:10.500px;background:#d8552f;border:1px solid #f3e3dc;border-radius:2px"><svg class="a" style="left:0;top:0" width="9" height="8.5"><path d="M2 1.8l5 5M7 1.8l-5 5" stroke="#fff" stroke-width="1.6"/></svg></div>
<div class="a" style="left:3px;top:17px;width:383px;height:221.500px;background:#ece9d8">
<div class="a" style="left:7.400px;top:6.200px;width:366.400px;height:167.500px;background:#fff;border:1px solid;border-color:#6e6c60 #f4f3ec #f4f3ec #6e6c60;overflow:hidden">
<div class="a" style="left:.8px;top:1.800px;font-weight:bold;font-size:9.600px;line-height:10.550px;color:#000;white-space:nowrap;letter-spacing:.35px">** Speeds in Onur-12.12.10 **<br>Average Speed: 1,9 km/h<br>Maximum Speed: 45,6 km/h<br>Minimum Speed: 0,1 km/h<br>Total Time: 06:54:45<br><br>**&nbsp; Onur-12.12.10 **<br>Cartographic Length = 12,976 km<br><br>** Speeds in Onur-12.12.10 **<br>Average Speed: 1,9 km/h<br>Maximum Speed: 45,6 km/h<br>Minimum Speed: 0,1 km/h<br>Total Time: 06:54:45</div>
<div class="a" style="left:352.5px;top:1px;width:12.5px;height:164.5px;background:#f6f8fd"></div>
<div class="a" style="left:352.5px;top:1px;width:12.5px;height:12.5px;background:#c3d3fb;border:1px solid #dfe8fd;border-radius:1.5px"><svg class="a" style="left:0;top:0" width="11" height="11"><path d="M2.6 6.8l2.7-2.6 2.7 2.6" fill="none" stroke="#42568f" stroke-width="1.5"/></svg></div>
<div class="a" style="left:352.5px;top:13.5px;width:12.5px;height:128px;background:#c6d6fd;border:1px solid #dbe5fe;border-radius:1.5px"></div>
<div class="a" style="left:352.5px;top:152.5px;width:12.5px;height:13px;background:#c3d3fb;border:1px solid #dfe8fd;border-radius:1.5px"><svg class="a" style="left:0;top:0" width="11" height="11"><path d="M2.6 4l2.7 2.6 2.7-2.6" fill="none" stroke="#42568f" stroke-width="1.5"/></svg></div>
</div>
<div class="a" style="left:60.0px;top:187.3px;width:80.5px;height:26.2px;background:#ece9d8;border:1px solid;border-color:#fff #5f5d52 #5f5d52 #fff;box-shadow:inset -1px -1px 0 #aca899"><div class="a" style="left:0;right:0;top:6.400px;text-align:center;font-size:8.700px;line-height:10px;color:#111">Copy to ClipBoard</div></div>
<div class="a" style="left:147.0px;top:187.3px;width:80.5px;height:26.2px;background:#ece9d8;border:1px solid;border-color:#fff #5f5d52 #5f5d52 #fff;box-shadow:inset -1px -1px 0 #aca899"><div class="a" style="left:0;right:0;top:6.400px;text-align:center;font-size:8.700px;line-height:10px;color:#111">Clear</div></div>
<div class="a" style="left:234.3px;top:187.3px;width:74.0px;height:26.2px;background:#ece9d8;border:1px solid #111;"><div class="a" style="left:0;top:0;right:0;bottom:0;border:1px solid;border-color:#fff #6d6b5f #6d6b5f #fff"></div><div class="a" style="left:3.5px;top:3.5px;right:3.5px;bottom:3.5px;border:1px dotted #222"></div><div class="a" style="left:0;right:0;top:6.400px;text-align:center;font-size:8.700px;line-height:10px;color:#111">Exit</div></div>
</div></div>
</body></html>
